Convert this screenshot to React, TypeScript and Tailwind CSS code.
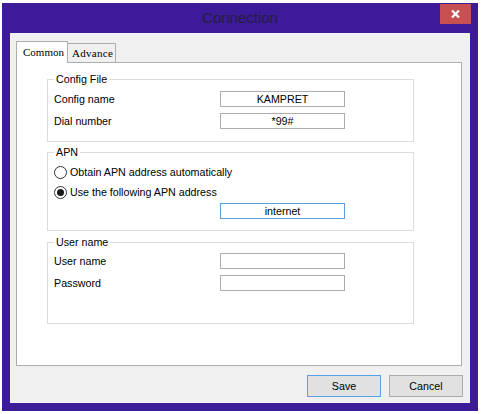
import React from "react";

const ui = "font-['Liberation_Sans',Arial,sans-serif] text-[10.7px] text-black";

function Field({value = "", focused = false}: {value?: string; focused?: boolean}) {
  return (
    <div
      className={`w-[125px] h-[16px] bg-white border flex items-center justify-center leading-none ${focused ? "border-[#5c9ee0]" : "border-[#adadad]"}`}
    >
      {value}
    </div>
  );
}

function Row({label, value}: {label: string; value?: string}) {
  return (
    <div className="grid grid-cols-[166px_125px] items-center">
      <span className="leading-none">{label}</span>
      <Field value={value}/>
    </div>
  );
}

function Group({title, className, children}: {title: string; className: string; children: React.ReactNode}) {
  return (
    <div className={`relative w-[367px] border border-[#dcdcdc] pl-[6px] ${className}`}>
      <span className="absolute left-[6px] top-[-8px] bg-white px-[2px] leading-[14px]">{title}</span>
      {children}
    </div>
  );
}

function Radio({label, checked = false}: {label: string; checked?: boolean}) {
  return (
    <div className="flex items-center h-[16px] gap-[3px]">
      <span className="w-[13px] h-[13px] rounded-full border border-[#333] bg-white flex items-center justify-center">
        {checked && <span className="w-[7px] h-[7px] rounded-full bg-[#1a1a1a]"/>}
      </span>
      <span className="leading-none">{label}</span>
    </div>
  );
}

export default function App() {
  return (
    <div className="w-[481px] h-[414px] bg-white pt-[3px] pl-[2px]">
      <div className="w-[476px] h-[408px] bg-[#3c1a98] flex flex-col">
        <div className="relative h-[30px] flex items-center justify-center pb-[1px]">
          <span className="font-['Liberation_Sans',Arial,sans-serif] text-[15px] text-[#251d40] leading-none">Connection</span>
          <div className="absolute right-[7px] top-[1px] w-[31px] h-[20px] bg-[#c75050] flex items-center justify-center">
            <svg width="9" height="8" viewBox="0 0 9 8">
              <path d="M1 0.5 L8 7.5 M8 0.5 L1 7.5" stroke="#fff" strokeWidth="2.2"/>
            </svg>
          </div>
        </div>

        <div className={`mx-[8px] mb-[8px] flex-1 bg-[#f0f0f0] flex flex-col pt-[8px] px-[6px] ${ui}`}>
          <div className="flex items-end h-[21px] font-['Liberation_Serif','Times_New_Roman',serif] text-[11px]">
            <div className="relative z-10 w-[52px] h-[22px] -mb-[1px] bg-white border border-b-0 border-[#adadad] pl-[6px] pt-[3px] leading-[14px]">
              Common
            </div>
            <div className="w-[48px] h-[19px] bg-[#f0f0f0] border border-l-0 border-b-0 border-[#adadad] pl-[4px] pt-[2px] leading-[14px] tracking-[0.3px]">
              Advance
            </div>
          </div>

          <div className="w-[446px] h-[304px] bg-white border border-[#adadad] pt-[16px] pl-[30px]">
            <Group title="Config File" className="h-[63px] pt-[11px] flex flex-col gap-[6px]">
              <Row label="Config name" value="KAMPRET"/>
              <Row label="Dial number" value="*99#"/>
            </Group>

            <Group title="APN" className="mt-[10px] h-[79px] pt-[11px] flex flex-col">
              <Radio label="Obtain APN address automatically"/>
              <div className="mt-[4px]">
                <Radio label="Use the following APN address" checked/>
              </div>
              <div className="mt-[3px] ml-[166px]">
                <Field value="internet" focused/>
              </div>
            </Group>

            <Group title="User name" className="mt-[11px] h-[82px] pt-[10px] flex flex-col gap-[6px]">
              <Row label="User name"/>
              <Row label="Password"/>
            </Group>
          </div>

          <div className="mt-[9px] flex justify-end gap-[8px] mr-[1px]">
            <button className="w-[74px] h-[22px] bg-[#e1e1e1] border border-[#5aa0e6] leading-none">Save</button>
            <button className="w-[74px] h-[22px] bg-[#e1e1e1] border border-[#adadad] leading-none">Cancel</button>
          </div>
        </div>
      </div>
    </div>
  );
}
